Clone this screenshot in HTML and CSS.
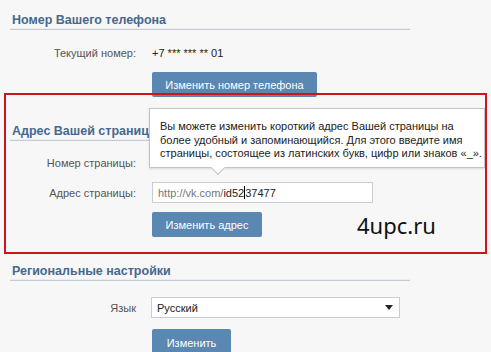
FILE: index.html
```html
<!DOCTYPE html>
<html lang="ru">
<head>
<meta charset="utf-8">
<title>Настройки</title>
<link rel="stylesheet" href="styles.css">
</head>
<body>
<div class="page">
  <section class="sec sec-first">
    <h2 class="head">Номер Вашего телефона</h2>
    <div class="row row-phone">
      <span class="label">Текущий номер:</span>
      <span class="value">+7 *** *** ** 01</span>
    </div>
    <div class="row row-btn row-btn1">
      <span></span>
      <button class="btn btn-phone">Изменить номер телефона</button>
    </div>
  </section>

  <section class="sec">
    <h2 class="head">Адрес Вашей страницы</h2>
    <div class="row row-num">
      <span class="label">Номер страницы:</span>
      <span class="value"></span>
    </div>
    <div class="row row-addr">
      <span class="label">Адрес страницы:</span>
      <div class="input"><span class="prefix">http://vk.com/</span><span class="typed">id52<span class="caret"></span>37477</span></div>
    </div>
    <div class="row row-btn row-btn2">
      <span></span>
      <button class="btn btn-addr">Изменить адрес</button>
    </div>
  </section>

  <section class="sec">
    <h2 class="head">Региональные настройки</h2>
    <div class="row row-lang">
      <span class="label">Язык</span>
      <div class="select"><span>Русский</span><span class="arrow"></span></div>
    </div>
    <div class="row row-btn row-btn3">
      <span></span>
      <button class="btn btn-lang">Изменить</button>
    </div>
  </section>

  <div class="tooltip">Вы можете изменить короткий адрес Вашей страницы на<br>более удобный и запоминающийся. Для этого введите имя<br>страницы, состоящее из латинских букв, цифр или знаков «_».<span class="tip-arrow"></span></div>
  <div class="mark"></div>
  <div class="brand">4upc.ru</div>
</div>
</body>
</html>
```

FILE: styles.css
```css
* { box-sizing: border-box; }
html, body { margin: 0; padding: 0; }
body {
  background: #f7f7f7;
  font-family: "Liberation Sans", Arial, sans-serif;
  font-size: 11px;
  color: #222;
  width: 491px;
  height: 352px;
  overflow: hidden;
}
.page {
  position: relative;
  padding-left: 10px;
  height: 352px;
}
.sec { width: 400px; padding-top: 26px; }
.sec-first { padding-top: 12px; }
.head {
  margin: 0;
  padding: 0 0 0 2px;
  font-size: 12.5px;
  line-height: 17px;
  font-weight: bold;
  color: #45688e;
  border-bottom: 1px solid #c5cbd5;
  box-shadow: 0 -3px 0 -2px #ececf2 inset;
}
.row {
  display: grid;
  grid-template-columns: 126px 1fr;
  column-gap: 16px;
  align-items: center;
}
.label { text-align: right; color: #555; }
.value { color: #222; }
.row-phone { height: 24px; margin-top: 11px; }
.row-btn1 { margin-top: 7px; }
.row-num { height: 24px; margin-top: 10px; }
.row-addr { margin-top: 7px; }
.row-btn2 { margin-top: 9px; }
.row-lang { margin-top: 16px; }
.row-btn3 { margin-top: 11px; }
.btn {
  justify-self: start;
  height: 25px;
  padding: 0;
  border: 0;
  border-radius: 2px;
  background: #5b87b3;
  color: #fff;
  font-family: inherit;
  font-size: 11px;
  white-space: nowrap;
  text-align: center;
}
.btn-phone { width: 165px; }
.btn-addr { width: 110px; }
.btn-lang { width: 79px; height: 28px; }
.input {
  width: 221px;
  height: 21px;
  background: #fff;
  border: 1px solid #c9cdd2;
  padding: 0 5px;
  display: flex;
  align-items: center;
}
.prefix { color: #777; }
.typed { color: #222; }
.caret {
  display: inline-block;
  width: 1px;
  height: 13px;
  background: #000;
  vertical-align: -2px;
}
.select {
  margin-left: -1px;
  width: 249px;
  height: 21px;
  background: #fff;
  border: 1px solid #c9cdd2;
  padding: 0 6px 0 5px;
  display: flex;
  align-items: center;
  justify-content: space-between;
  color: #222;
}
.arrow {
  width: 0; height: 0;
  border-left: 4px solid transparent;
  border-right: 4px solid transparent;
  border-top: 5px solid #222;
}
.tooltip {
  position: absolute;
  left: 149px;
  top: 108px;
  width: 336px;
  height: 60px;
  background: #fff;
  border: 1px solid #c4c4c4;
  box-shadow: 0 1px 2px rgba(0,0,0,0.12);
  padding: 11px 0 0 10px;
  line-height: 13.5px;
  color: #222;
  white-space: nowrap;
}
.tip-arrow {
  position: absolute;
  left: 63px;
  bottom: -6px;
  width: 10px;
  height: 10px;
  background: #fff;
  border-right: 1px solid #c4c4c4;
  border-bottom: 1px solid #c4c4c4;
  transform: rotate(45deg);
}
.mark {
  position: absolute;
  left: 4px;
  top: 93px;
  width: 483px;
  height: 161px;
  border: 2px solid #d0141f;
}
.brand {
  position: absolute;
  left: 357px;
  top: 211px;
  font-family: "Noto Sans", "Open Sans", sans-serif;
  font-size: 22px;
  line-height: 28px;
  color: #111;
}
```
